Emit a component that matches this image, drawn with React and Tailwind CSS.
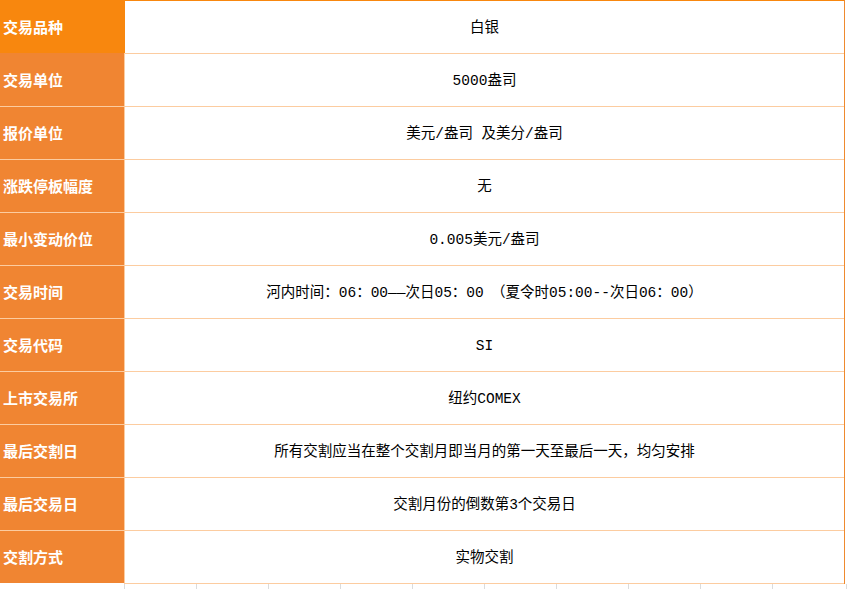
import React from 'react';

const rows = [
    ['交易品种', '白银'],
    ['交易单位', '5000盎司'],
    ['报价单位', '美元/盎司 及美分/盎司'],
    ['涨跌停板幅度', '无'],
    ['最小变动价位', '0.005美元/盎司'],
    ['交易时间', '河内时间：06：00——次日05：00　（夏令时05:00--次日06：00）'],
    ['交易代码', 'SI'],
    ['上市交易所', '纽约COMEX'],
    ['最后交割日', '所有交割应当在整个交割月即当月的第一天至最后一天，均匀安排'],
    ['最后交易日', '交割月份的倒数第3个交易日'],
    ['交割方式', '实物交割'],
];

const font = { fontFamily: '"Noto Sans CJK SC", "Noto Sans", sans-serif' };
const valueFont = { fontFamily: '"Liberation Mono", "Noto Sans CJK SC", monospace' };

function Row({ label, value, index, last }) {
    const first = index === 0;
    const leftCls = first
        ? 'bg-[#f8870e] h-[53px]'
        : index === 1
            ? 'bg-[#f08532] h-[53px]'
            : 'bg-[#f08532] h-[53px] border-t border-[#fccca0]';

    const rightTop = first
        ? 'border-t border-[#f18a1f]'
        : index === 1
            ? 'border-t border-[#e9832f]'
            : 'border-t border-[#fccca0]';

    const rightLeft = first ? 'border-l border-[#f8870e]' : 'border-l border-[#fccca0]';

    return (
        <div className="flex">
            <div className={`w-[124px] shrink-0 flex items-center pl-[3px] pb-[1px] ${leftCls}`}>
                <span className="text-white font-bold text-[15px] leading-none">{label}</span>
            </div>
            <div
                className={`flex-1 h-[53px] flex items-center justify-center pt-[3px] bg-white ${rightTop} ${rightLeft} ${last ? 'border-b border-[#e9832f] h-[54px]' : ''}`}
            >
                <span className="text-black text-[14.5px] leading-none whitespace-pre" style={valueFont}>{value}</span>
            </div>
        </div>
    );
}

export default function App() {
    const gridCols = Array.from({ length: 10 });

    return (
        <div className="w-[848px] h-[589px] bg-white overflow-hidden" style={font}>
            <div className="w-[845px] border-r border-[#ef8a2e]">
                {rows.map(([label, value], i) => (
                    <Row key={label} label={label} value={value} index={i} last={i === rows.length - 1} />
                ))}
            </div>

            {/* spreadsheet gridlines below the table */}
            <div className="flex h-[6px]">
                <div className="w-[124px] shrink-0" />
                {gridCols.map((_, i) => (
                    <div key={i} className="w-[72px] shrink-0 border-l border-[#dcdcdc]" />
                ))}
                <div className="w-[2px] shrink-0" />
                <div className="w-[1px] shrink-0 bg-[#dcdcdc]" />
            </div>
        </div>
    );
}
